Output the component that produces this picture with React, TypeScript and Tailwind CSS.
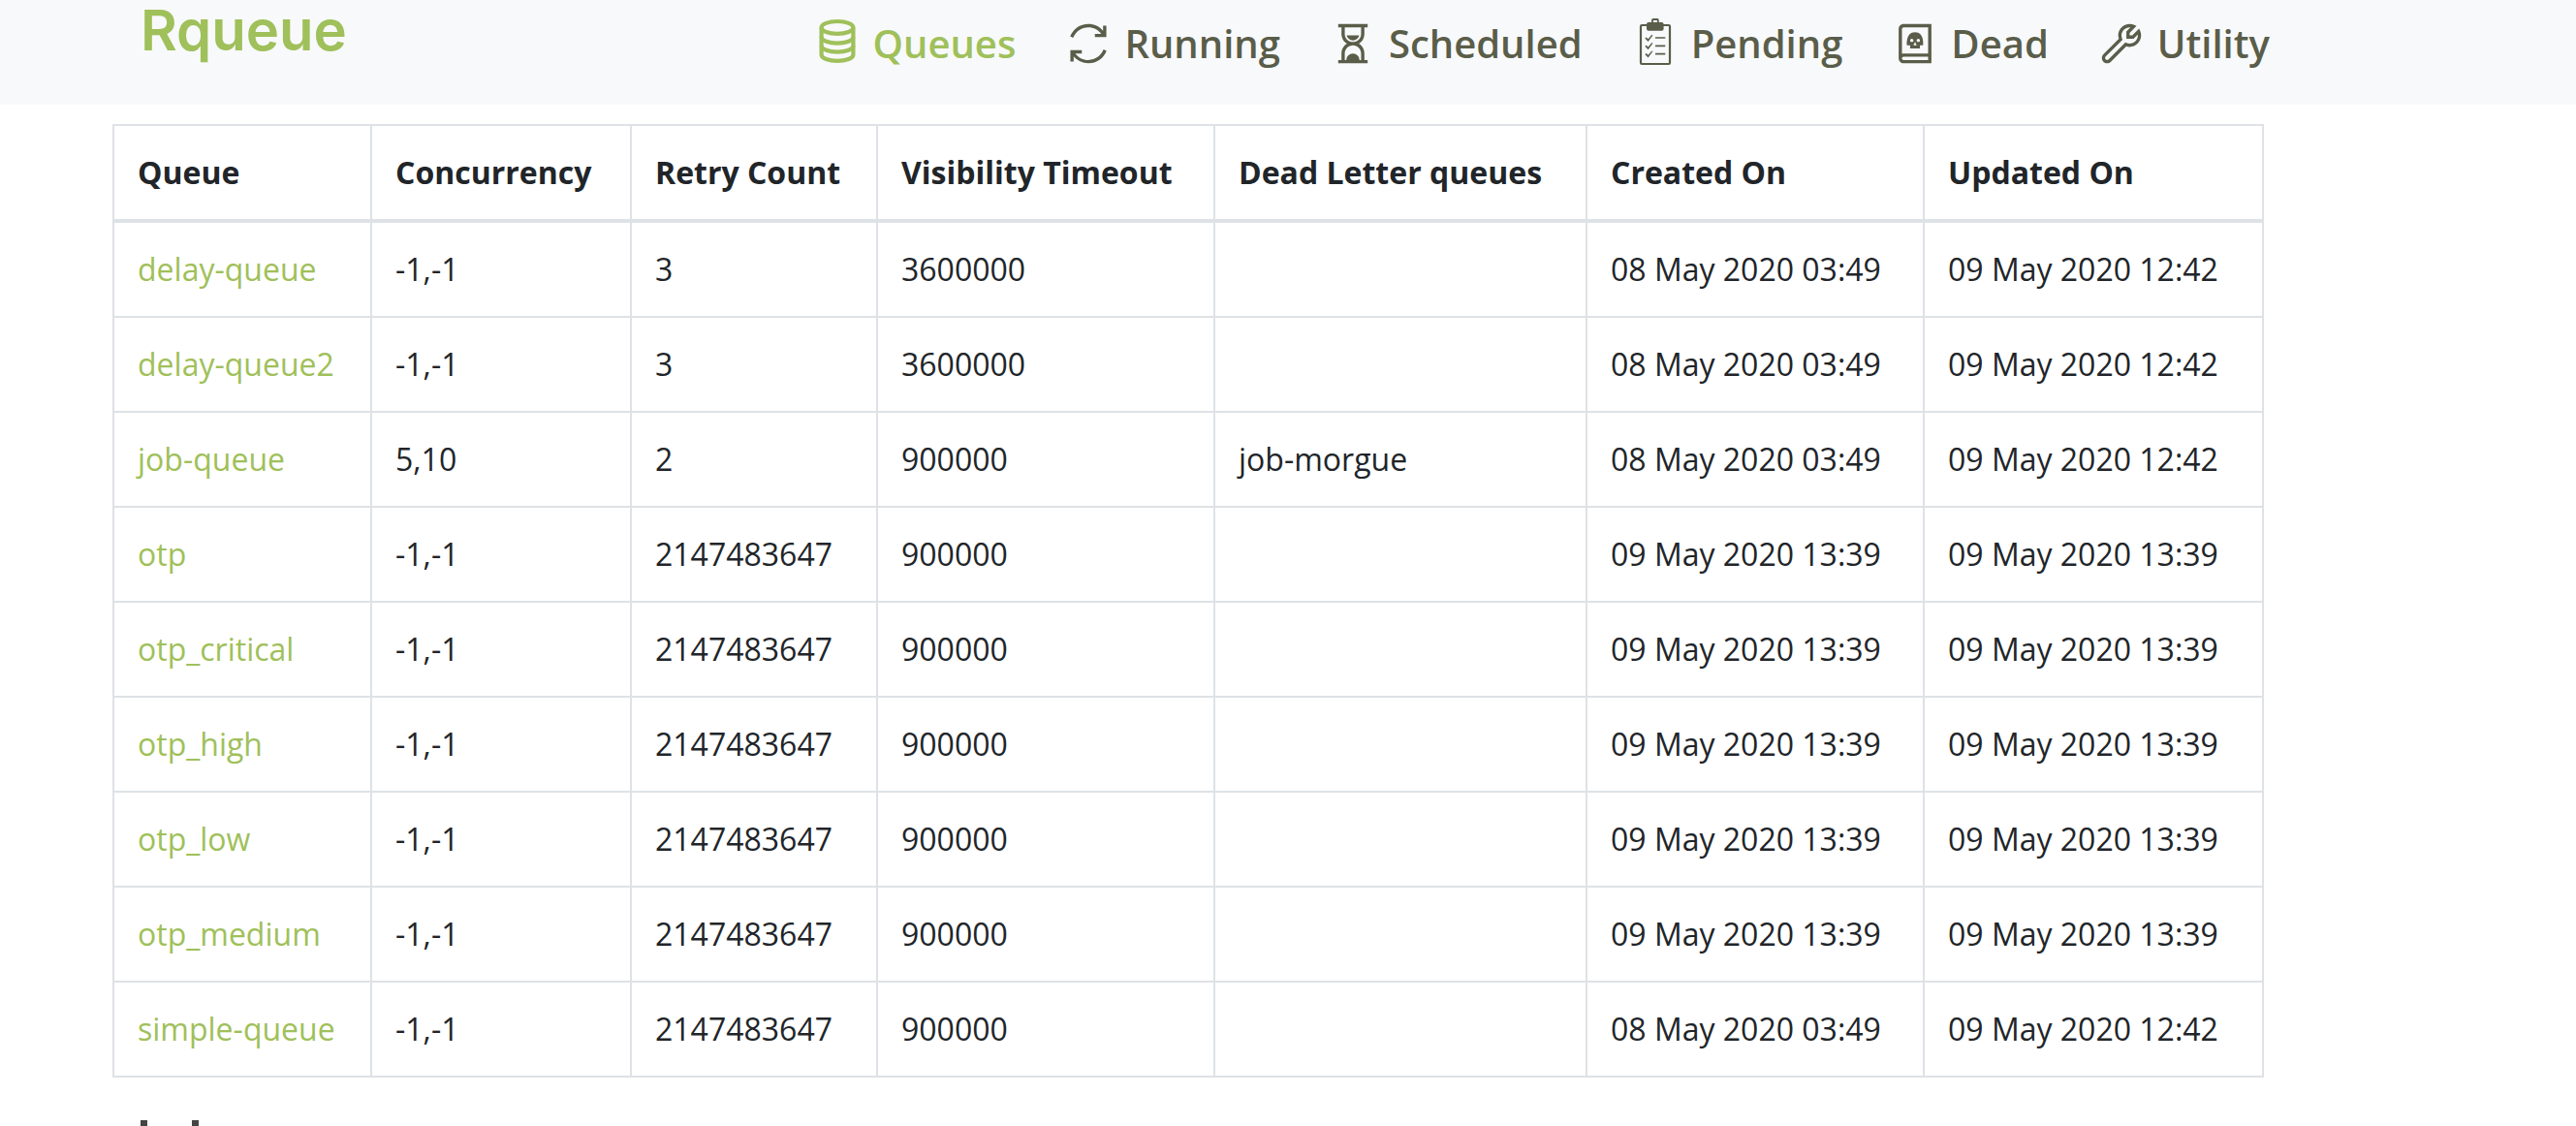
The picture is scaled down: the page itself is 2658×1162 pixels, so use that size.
import React from "react";
import {
  LiaBookDeadSolid,
  LiaHourglassHalfSolid,
  LiaSyncSolid,
  LiaWrenchSolid,
} from "react-icons/lia";

type IconProps = { className?: string };

function DatabaseIcon({ className }: IconProps) {
  return (
    <svg viewBox="0 0 54 54" className={className} fill="none" stroke="currentColor" strokeWidth="4.2" aria-hidden="true">
      <ellipse cx="27" cy="10.4" rx="16.4" ry="6.4" />
      <path d="M10.6 10.4V38.4C10.6 42 18 44.8 27 44.8S43.4 42 43.4 38.4V10.4" />
      <path d="M10.6 20C10.6 23.8 18 26.6 27 26.6S43.4 23.8 43.4 20" />
      <path d="M10.6 29C10.6 32.8 18 35.6 27 35.6S43.4 32.8 43.4 29" />
    </svg>
  );
}

function ChecklistIcon({ className }: IconProps) {
  return (
    <svg viewBox="0 0 54 54" className={className} fill="none" stroke="currentColor" aria-hidden="true">
      <rect x="12" y="8" width="30" height="40" rx="1.2" strokeWidth="2.2" />
      <rect x="18" y="5" width="17.6" height="8.8" rx="2" fill="currentColor" stroke="none" />
      <path d="M24 6V2.6Q24 2 24.6 2H29.2Q29.8 2 29.8 2.6V6" strokeWidth="1.8" />
      <path d="M27 21H37.3M27 29.3H37.3M27 37.6H37.3" strokeWidth="1.7" />
      <g fill="currentColor" stroke="none">
        <path d="M16.3 21.4L17.8 20.4L19.6 22.2L23.4 17.8L24.4 18.4L19.6 25Z" />
        <path d="M16.3 29.7L17.8 28.7L19.6 30.5L23.4 26.1L24.4 26.7L19.6 33.3Z" />
        <path d="M16.3 38L17.8 37L19.6 38.8L23.4 34.4L24.4 35L19.6 41.6Z" />
      </g>
    </svg>
  );
}

const navItems = [
  { label: "Queues", Icon: DatabaseIcon, active: true },
  { label: "Running", Icon: LiaSyncSolid },
  { label: "Scheduled", Icon: LiaHourglassHalfSolid },
  { label: "Pending", Icon: ChecklistIcon },
  { label: "Dead", Icon: LiaBookDeadSolid },
  { label: "Utility", Icon: LiaWrenchSolid },
];

const columns = [
  { name: "Queue", width: "w-[266px]" },
  { name: "Concurrency", width: "w-[268px]" },
  { name: "Retry Count", width: "w-[254px]" },
  { name: "Visibility Timeout", width: "w-[348px]" },
  { name: "Dead Letter queues", width: "w-[384px]" },
  { name: "Created On", width: "w-[348px]" },
  { name: "Updated On", width: "w-[350px]" },
];

const rows = [
  ["delay-queue", "-1,-1", "3", "3600000", "", "08 May 2020 03:49", "09 May 2020 12:42"],
  ["delay-queue2", "-1,-1", "3", "3600000", "", "08 May 2020 03:49", "09 May 2020 12:42"],
  ["job-queue", "5,10", "2", "900000", "job-morgue", "08 May 2020 03:49", "09 May 2020 12:42"],
  ["otp", "-1,-1", "2147483647", "900000", "", "09 May 2020 13:39", "09 May 2020 13:39"],
  ["otp_critical", "-1,-1", "2147483647", "900000", "", "09 May 2020 13:39", "09 May 2020 13:39"],
  ["otp_high", "-1,-1", "2147483647", "900000", "", "09 May 2020 13:39", "09 May 2020 13:39"],
  ["otp_low", "-1,-1", "2147483647", "900000", "", "09 May 2020 13:39", "09 May 2020 13:39"],
  ["otp_medium", "-1,-1", "2147483647", "900000", "", "09 May 2020 13:39", "09 May 2020 13:39"],
  ["simple-queue", "-1,-1", "2147483647", "900000", "", "08 May 2020 03:49", "09 May 2020 12:42"],
];

export default function App() {
  return (
    <div className="h-screen overflow-hidden bg-white font-['Open_Sans',sans-serif] text-[32px] leading-[48px] text-[#212529]">
      <header className="bg-[#f8f9fb] pb-9 pl-[145px]">
        <div className="flex max-w-[2197px] items-start justify-between">
          <a href="#home" className="font-['Inter',sans-serif] text-[58px] leading-[62px] font-semibold text-[#9fc05a]">
            Rqueue
          </a>
          <nav className="flex gap-12 pt-[18px]">
            {navItems.map(({ label, Icon, active }) => (
              <a
                key={label}
                href={`#${label.toLowerCase()}`}
                className={`flex items-center gap-[10px] text-[40px] leading-[54px] font-semibold ${
                  active ? "text-[#9fc05a]" : "text-[#5a5d49]"
                }`}
              >
                <Icon className="size-[54px]" />
                {label}
              </a>
            ))}
          </nav>
        </div>
      </header>

      <main className="pt-5 pl-[116px]">
        <table className="w-full max-w-[2220px] border-collapse border-2 border-[#dee2e6] text-left">
          <colgroup>
            {columns.map(({ name, width }) => (
              <col key={name} className={width} />
            ))}
          </colgroup>
          <thead>
            <tr>
              {columns.map(({ name }) => (
                <th key={name} scope="col" className="border-2 border-b-4 border-[#dee2e6] p-6 font-bold whitespace-nowrap">
                  {name}
                </th>
              ))}
            </tr>
          </thead>
          <tbody>
            {rows.map(([queue, ...cells]) => (
              <tr key={queue}>
                <td className="border-2 border-[#dee2e6] p-6 whitespace-nowrap">
                  <a href={`#${queue}`} className="text-[#9fc05a]">
                    {queue}
                  </a>
                </td>
                {cells.map((cell, i) => (
                  <td key={i} className="border-2 border-[#dee2e6] p-6 whitespace-nowrap">
                    {cell}
                  </td>
                ))}
              </tr>
            ))}
          </tbody>
        </table>
        <div className="flex gap-[46px] pt-11 pl-[29px]" aria-hidden="true">
          <span className="h-10 w-[7px] bg-[#444444]" />
          <span className="h-10 w-[7px] bg-[#444444]" />
        </div>
      </main>
    </div>
  );
}
